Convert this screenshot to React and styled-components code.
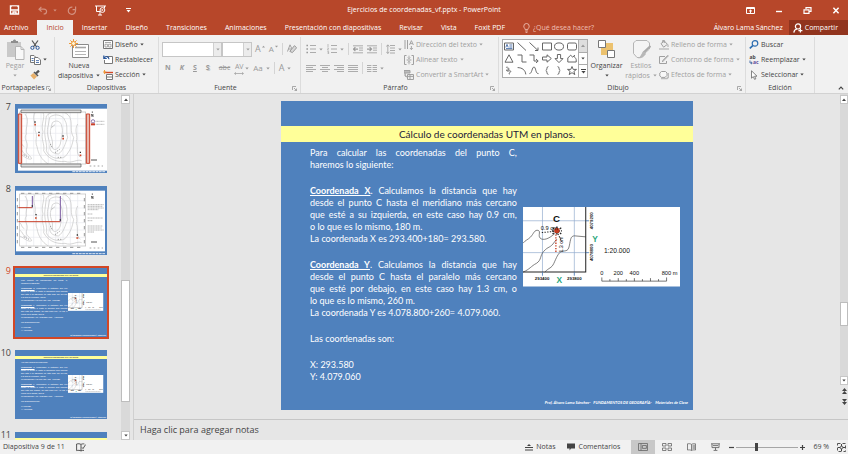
import React, { useState } from "react";
import styled, { createGlobalStyle } from "styled-components";

const GlobalStyle = createGlobalStyle`
    * {
        box-sizing: border-box;
    }
    body {
        margin: 0;
        font-family: "Open Sans", "Noto Sans", sans-serif;
        font-size: 7px;
        line-height: 10px;
        color: #444;
        background-color: #e6e6e6;
    }
    button, select, input, textarea {
        font: inherit;
        color: inherit;
        margin: 0;
        padding: 0;
        border: none;
        background: none;
    }
    p, h1, h2, ol {
        margin: 0;
        padding: 0;
    }
    svg {
        display: block;
        flex: none;
    }
`
const Window = styled.div`
    display: flex;
    flex-direction: column;
    height: 100vh;
    overflow: hidden;
`

/* title bar */
const TitleBar = styled.header`
    display: grid;
    grid-template-columns: 1fr auto 1fr;
    align-items: center;
    height: 20px;
    background-color: #b7472a;
    color: #fff;
`
const QuickAccess = styled.div`
    display: flex;
    align-items: center;
    padding-left: 9px;
`
const QuickButton = styled.button`
    display: flex;
    align-items: center;
    gap: 5px;
    margin-right: ${props => props.$space || 0}px;
    opacity: ${props => props.$dim ? 0.4 : 1};
`
const DocTitle = styled.h1`
    font-size: 7px;
    font-weight: 400;
`
const WindowControls = styled.div`
    display: flex;
    justify-content: flex-end;
    gap: 20px;
    padding-right: 8px;
`

/* tabs */
const TabBar = styled.nav`
    display: flex;
    align-items: stretch;
    height: 15px;
    background-color: #b7472a;
    color: #fff;
`
const Tab = styled.button`
    padding: 0 9px;
    white-space: nowrap;
    color: ${props => props.$active ? "#b7472a" : "#fff"};
    background-color: ${props => props.$active ? "#f1f1f1" : "transparent"};
    &:first-child {
        padding-left: 4px;
    }
`
const TellMe = styled.label`
    display: flex;
    align-items: center;
    gap: 3px;
    margin-left: 9px;
    flex: 1;
    color: #eebfb2;
    input {
        width: 100%;
        min-width: 0;
    }
    input::placeholder {
        color: #eebfb2;
        opacity: 1;
    }
`
const Account = styled.button`
    padding: 0 6px;
    white-space: nowrap;
    color: #fff;
`
const ShareButton = styled.button`
    display: flex;
    align-items: center;
    gap: 2px;
    padding: 0 10px 0 4px;
    background-color: #91341e;
    color: #fff;
`

/* ribbon */
const Ribbon = styled.div`
    display: flex;
    align-items: stretch;
    height: 59px;
    padding-top: 2px;
    background-color: #f1f1f1;
    border-bottom: 1px solid #d2d2d2;
`
const Group = styled.section`
    display: flex;
    flex-direction: column;
    justify-content: space-between;
    flex: 0 0 ${props => props.$width}px;
    min-width: 0;
    border-right: 1px solid #dcdcdc;
`
const GroupBody = styled.div`
    display: flex;
    gap: ${props => props.$gap || 0}px;
    padding: 0 3px;
`
const GroupFooter = styled.div`
    display: flex;
    align-items: center;
    height: 10px;
    h2 {
        flex: 1;
        font-size: 7px;
        font-weight: 400;
        text-align: center;
    }
`
const Launcher = styled.button`
    width: 8px;
    color: #8a8a8a;
`
const BigButton = styled.button`
    display: flex;
    flex-direction: column;
    align-items: center;
    width: ${props => props.$width}px;
    padding-top: 2px;
    color: ${props => props.$dim ? "#a0a0a0" : "#444"};
    span {
        display: flex;
        align-items: center;
        justify-content: center;
        gap: 3px;
        height: 10px;
        white-space: nowrap;
    }
    svg:first-child {
        margin-bottom: 1px;
    }
`
const Stack = styled.div`
    display: flex;
    flex-direction: column;
`
const SmallButton = styled.button`
    display: flex;
    align-items: center;
    gap: 2px;
    height: 15px;
    white-space: nowrap;
    color: ${props => props.$dim ? "#a0a0a0" : "#444"};
`
const ToolRows = styled.div`
    display: flex;
    flex-direction: column;
    gap: 5px;
    padding-top: 5px;
`
const ToolRow = styled.div`
    display: flex;
    align-items: center;
    gap: ${props => props.$gap}px;
    height: 14px;
    padding-left: ${props => props.$indent || 0}px;
`
const ToolButton = styled.button`
    display: flex;
    align-items: center;
    gap: ${props => props.$tight ? 1 : 3}px;
    color: #9a9a9a;
    font-size: ${props => props.$size || 7}px;
    font-weight: ${props => props.$bold ? 700 : 400};
    font-style: ${props => props.$italic ? "italic" : "normal"};
    text-decoration: ${props => props.$line || "none"};
    text-shadow: ${props => props.$shadow ? "1px 1px 0 #ccc" : "none"};
`
const Divider = styled.span`
    width: 1px;
    height: 12px;
    background-color: #d4d4d4;
`
const SelectWrap = styled.div`
    display: grid;
    width: ${props => props.$width}px;
    height: 15px;
    border: 1px solid #c6c6c6;
    background-color: #fff;
    select {
        grid-area: 1 / 1;
        appearance: none;
        width: 100%;
    }
`
const SelectArrow = styled.span`
    grid-area: 1 / 1;
    justify-self: end;
    display: flex;
    align-items: center;
    justify-content: center;
    width: 8px;
    background-color: #ececec;
    border-left: 1px solid #d0d0d0;
    color: #a0a0a0;
    pointer-events: none;
`
const Gallery = styled.div`
    display: flex;
    width: 86px;
    height: 39px;
    margin-top: 2px;
    border: 1px solid #ababab;
    background-color: #fff;
`
const Shapes = styled.div`
    display: grid;
    grid-template-columns: repeat(6, 1fr);
    flex: 1;
    place-items: center;
    color: #666;
`
const GalleryScroll = styled.div`
    display: flex;
    flex-direction: column;
    width: 9px;
    border-left: 1px solid #ababab;
    button {
        flex: 1;
        display: flex;
        align-items: center;
        justify-content: center;
    }
    button:first-child {
        background-color: #dedede;
        color: #999;
    }
    button + button {
        border-top: 1px solid #ababab;
    }
`
const Collapse = styled.button`
    margin-left: auto;
    align-self: flex-end;
    padding: 0 4px 3px;
`

/* work area */
const Workspace = styled.div`
    display: flex;
    flex: 1;
    min-height: 0;
    background-color: #e6e6e6;
`
const ThumbPane = styled.aside`
    display: flex;
    flex: 0 0 134px;
    padding-right: 3px;
    border-right: 1px solid #d0d0d0;
`
const ThumbList = styled.ol`
    display: flex;
    flex-direction: column;
    gap: 13px;
    flex: 1;
    padding-top: 10px;
    overflow: hidden;
    list-style: none;
`
const ThumbItem = styled.li`
    display: flex;
    flex: none;
    gap: 4px;
    font-size: 9px;
    line-height: 5px;
    color: ${props => props.$active ? "#d24726" : "#444"};
    > span {
        width: 11px;
        text-align: right;
    }
`
const ThumbFrame = styled.button`
    display: block;
    width: 92px;
    height: 69px;
    text-align: left;
    outline: ${props => props.$active ? "2px solid #d24726" : "none"};
`
const ScrollTrack = styled.div`
    display: flex;
    flex-direction: column;
    width: ${props => props.$width}px;
    padding-top: 1px;
    background-color: #d9d9d9;
`
const ScrollButton = styled.button`
    display: flex;
    align-items: center;
    justify-content: center;
    height: 9px;
    flex: none;
    background-color: #fff;
    border: 1px solid #c6c6c6;
`
const ScrollThumb = styled.div`
    height: ${props => props.$length}px;
    background-color: #fff;
    border: 1px solid #bdbdbd;
`
const ScrollSpace = styled.div`
    flex: ${props => props.$grow};
`
const SlideSteps = styled.div`
    display: flex;
    flex-direction: column;
    align-items: center;
    gap: 5px;
    padding: 3px 0 14px;
    background-color: #e6e6e6;
`
const Editor = styled.main`
    display: flex;
    flex-direction: column;
    flex: 1;
    min-width: 0;
`
const Canvas = styled.div`
    display: flex;
    flex: 1;
    min-height: 0;
`
const Stage = styled.div`
    display: flex;
    flex: 1;
    align-items: flex-start;
    justify-content: center;
    padding-top: 7px;
    overflow: hidden;
`
const StageSlide = styled.div`
    width: 100%;
    max-width: 412px;
    aspect-ratio: 4 / 3;
`
const Notes = styled.textarea`
    display: block;
    width: 100%;
    height: 21px;
    padding: 5px 6px;
    border-top: 1px solid #c6c6c6;
    font-size: 9px;
    resize: none;
    overflow: hidden;
    &::placeholder {
        color: #444;
        opacity: 1;
    }
`

/* slide, $mini is the thumbnail version */
const SlideSheet = styled.article`
    display: flex;
    flex-direction: column;
    width: 100%;
    height: 100%;
    padding-top: ${props => props.$mini ? 6 : 25}px;
    overflow: hidden;
    background-color: #4f81bd;
    font-family: Lato, "Open Sans", sans-serif;
    color: #fff;
`
const SlideBand = styled.div`
    height: ${props => props.$mini ? 3 : 16}px;
    line-height: ${props => props.$mini ? 3 : 16}px;
    flex: none;
    background-color: #ffff99;
    color: #1d1b3a;
    font-size: ${props => props.$mini ? 2 : 10}px;
    text-align: center;
`
const SlideBody = styled.div`
    display: flex;
    flex: 1;
    gap: ${props => props.$mini ? 1 : 6}px;
    padding-left: ${props => props.$mini ? 6 : 29}px;
    padding-top: ${props => props.$mini ? 2 : 5}px;
`
const SlideText = styled.div`
    display: flex;
    flex-direction: column;
    gap: ${props => props.$mini ? 2 : 14}px;
    flex: 0 0 54%;
    font-size: ${props => props.$mini ? 2 : 9}px;
    line-height: ${props => props.$mini ? 3 : 12}px;
`
const Line = styled.span`
    display: block;
    white-space: nowrap;
    text-align: justify;
    text-align-last: ${props => props.$full ? "justify" : "left"};
    b {
        text-decoration: underline;
    }
`
const SlideFigure = styled.div`
    flex: 0 0 41%;
    padding-top: ${props => props.$mini ? 14 : 60}px;
    svg {
        width: 100%;
        height: auto;
    }
`
const SlideFooter = styled.div`
    padding-right: ${props => props.$mini ? 1 : 5}px;
    height: ${props => props.$mini ? 2 : 10}px;
    line-height: ${props => props.$mini ? 1 : 6}px;
    font-size: ${props => props.$mini ? 1 : 4}px;
    font-weight: 700;
    font-style: italic;
    text-align: right;
    white-space: pre;
`

/* status bar */
const StatusBar = styled.footer`
    display: flex;
    align-items: center;
    height: 14px;
    flex: none;
    padding-left: 3px;
    background-color: #f1f1f1;
`
const StatusButton = styled.button`
    display: flex;
    align-items: center;
    justify-content: center;
    gap: 3px;
    height: 14px;
    padding: 0 ${props => props.$pad || 6}px;
    white-space: nowrap;
    background-color: ${props => props.$active ? "#c8c8c8" : "transparent"};
`
const StatusSpace = styled.div`
    flex: 1;
`
const Views = styled.div`
    display: flex;
    margin-left: 5px;
`
const ViewButton = styled(StatusButton)`
    width: 24px;
    padding: 0;
    color: #666;
`
const ZoomSlider = styled.input`
    appearance: none;
    width: 62px;
    height: 8px;
    background: linear-gradient(#a6a6a6, #a6a6a6) center / 100% 1px no-repeat;
    &::-webkit-slider-thumb {
        appearance: none;
        width: 3px;
        height: 8px;
        background-color: #444;
    }
`

function Svg({ w, h, vb, children }) {
    return (
        <svg width={w} height={h} viewBox={vb || `0 0 ${w} ${h}`} fill="none" stroke="currentColor" strokeWidth="1" aria-hidden="true">
            {children}
        </svg>
    )
}

function Caret({ up }) {
    return (
        <Svg w={4} h={3}>
            <path d={up ? "M0 3L2 0.5L4 3Z" : "M0.3 0.5L2 2.5L3.7 0.5Z"} fill="currentColor" stroke="none" />
        </Svg>
    )
}

function LaunchIcon() {
    return (
        <Svg w={5} h={5} vb="0 0 10 10">
            <path d="M1 8V1H8M4 4L9 9M9 5V9H5" strokeWidth="1.4" />
        </Svg>
    )
}

const LINES = {
    left: [10, 7, 10, 7],
    center: [10, 6, 10, 6],
    right: [10, 7, 10, 7],
    justify: [10, 10, 10, 10],
}

function AlignIcon({ kind }) {
    return (
        <Svg w={10} h={9}>
            {LINES[kind].map((len, i) => {
                const x = kind === "right" ? 10 - len : kind === "center" ? (10 - len) / 2 : 0;
                return <path key={i} d={`M${x} ${i * 2 + 1.5}h${len}`} strokeWidth="0.8" />
            })}
        </Svg>
    )
}

function ListIcon({ numbered }) {
    return (
        <Svg w={10} h={10}>
            <path d="M4 1.5H10M4 5H10M4 8.5H10" strokeWidth="0.8" />
            {numbered
                ? <path d="M1 0V3M0.3 4H1.6L0.4 6H1.8M0.3 7.4H1.6V10H0.3M0.6 8.6H1.6" strokeWidth="0.6" />
                : <path d="M0.4 1.5H2M0.4 5H2M0.4 8.5H2" strokeWidth="1.5" />}
        </Svg>
    )
}

function IndentIcon({ right }) {
    return (
        <Svg w={10} h={9}>
            <path d="M0 0.8H10M6 3H10M6 5.2H10M0 7.8H10" strokeWidth="0.8" />
            <path d={right ? "M0 4.1H4.4M2.6 2.2L4.6 4.1L2.6 6" : "M0.6 4.1H5M2.4 2.2L0.5 4.1L2.4 6"} strokeWidth="1.1" />
        </Svg>
    )
}

const SHAPES = [
    <><path d="M0.5 1H9.5V8H0.5Z" /><path d="M1.8 5.4L3 2.4L4.2 5.4M5.4 3H8.4M5.4 5H8.4M2 6.6H8.4" stroke="#2b579a" strokeWidth="0.8" /></>,
    <path d="M0.5 0.5L9 8.5" />,
    <path d="M0.5 0.5L9 8.5M9 5.5V8.5H6" />,
    <path d="M0.5 1H9.5V8H0.5Z" />,
    <ellipse cx="5" cy="4.5" rx="4.5" ry="3.6" />,
    <rect x="0.5" y="1" width="9" height="7" rx="1.6" />,
    <path d="M5 0.8L9 8.2H1Z" />,
    <path d="M0.5 1H5V8H9.5" />,
    <path d="M0.5 1H5V7H9M7 5L9.2 7L7 9" />,
    <path d="M0.5 3H5V0.8L9.3 4.5L5 8.2V6H0.5Z" />,
    <path d="M3.4 0.5H6.6V4.6H9L5 8.6L1 4.6H3.4Z" />,
    <path d="M0.8 8V4L3.6 1.2L5.8 3.2L7.6 1.2C6 4 9.4 3.4 9.2 5.6V8Z" />,
    <path d="M3 0.6C1 2.4 6.4 1.6 5 3.6C3.6 5 2 3 2.6 4.6C3.4 6 7.4 3.6 6.6 5.8C6 7.4 4.6 6 5.4 8.4" />,
    <path d="M0.6 1.6C5 1.6 8.4 4 8.8 8.4" />,
    <path d="M0.5 7.6C3 7.6 3 1 5 1C7 1 6.4 8 9.5 7.6" />,
    <path d="M6.4 0.6C4 0.6 5.8 4 3.8 4.5C5.8 5 4 8.4 6.4 8.4" />,
    <path d="M3.6 0.6C6 0.6 4.2 4 6.2 4.5C4.2 5 6 8.4 3.6 8.4" />,
    <path d="M5 0.5L6.2 3.4H9.5L6.9 5.4L7.8 8.6L5 6.7L2.2 8.6L3.1 5.4L0.5 3.4H3.8Z" />,
]

function MapFigure() {
    return (
        <svg viewBox="0 0 468 237" fill="none" fontFamily="Liberation Sans, sans-serif">
            <rect width="468" height="237" fill="#fff" />
            <path d="M58 0V206M153 0V206M0 41H196M0 136H196" stroke="#8fa9cc" strokeWidth="2" />
            <path d="M0 108C8 98 14 98 22 90C32 80 34 66 46 70C54 74 42 88 54 95C66 100 82 92 100 74M0 194C20 186 24 176 40 168C56 158 50 144 62 132C76 116 80 124 94 104L101 96M65 194C78 180 84 184 92 168C100 150 104 140 112 134C124 128 134 136 138 116C142 96 142 86 154 86L187 89" stroke="#444" strokeWidth="2" />
            <path d="M187 0V194H0" stroke="#222" strokeWidth="3" />
            <path d="M58 194V204M153 194V204M187 41H197M187 136H197" stroke="#4f81bd" strokeWidth="2" />
            <path d="M56 76L92 73M104 80L116 104" stroke="#222" strokeWidth="3" strokeDasharray="4 4" />
            <path d="M98 82V136" stroke="#c43a1e" strokeWidth="4" strokeDasharray="4 4" />
            <path d="M88 62L114 80M114 62L88 80M101 58V84M86 71H116" stroke="#222" strokeWidth="4" strokeDasharray="6 3" />
            <circle cx="101" cy="70" r="8" fill="#c43a1e" />
            <g fill="#111" textAnchor="middle">
                <text x="100" y="44" fontSize="29" fontWeight="700">C</text>
                <text x="78" y="68" fontSize="17">0.9 cm</text>
                <text transform="translate(120 112) rotate(-90)" fontSize="16">1.3 cm</text>
                <g fontSize="13" fontWeight="700">
                    <text x="57" y="217">293400</text>
                    <text x="153" y="217">293800</text>
                    <text transform="translate(210 41) rotate(-90)">4079200</text>
                    <text transform="translate(210 136) rotate(-90)">4078800</text>
                </g>
                <text x="280" y="138" fontSize="20">1:20.000</text>
                <g fontSize="17">
                    <text x="235" y="202">0</text>
                    <text x="284" y="202">200</text>
                    <text x="332" y="202">400</text>
                    <text x="437" y="202">800 m</text>
                </g>
            </g>
            <g fill="#1fa67a" fontSize="25" fontWeight="700" textAnchor="middle">
                <text x="108" y="226">X</text>
                <text x="215" y="105">Y</text>
            </g>
            <path d="M235 210V221H428V210M259 215V221M284 212V221M308 215V221M332 212V221M356 215V221M380 212V221M404 215V221" stroke="#333" strokeWidth="2" />
        </svg>
    )
}

function Contours() {
    return (
        <g stroke="#c2c2c2" strokeWidth="2">
            <path d="M30 30C46 50 30 70 34 90C24 104 40 112 36 130C28 150 44 150 50 164C40 170 28 156 14 150M60 26C50 44 64 60 60 78C70 96 58 110 66 128C70 150 80 168 100 180M84 26C92 40 76 60 84 84C76 104 90 120 86 140C96 160 120 176 150 172C170 180 186 164 200 170" />
            <path d="M104 40C120 26 146 34 150 50C160 66 152 84 158 100C150 120 146 140 130 150C112 148 100 140 106 120C98 100 94 80 100 64Z" />
            <path d="M112 56C124 46 138 52 140 66C146 84 138 104 136 120C128 140 112 142 112 126C116 108 104 96 106 80Z" />
            <path d="M94 36C116 14 160 20 166 44C172 60 164 84 176 100C172 124 166 140 150 158C130 170 100 160 94 140C98 120 86 100 90 70Z" />
            <path d="M188 60C176 80 190 96 184 112C192 130 180 146 196 160M14 110C22 116 18 124 28 128M14 132C26 140 22 150 34 152" />
            <path d="M110 70L120 62M106 120L112 132M120 146L134 136M26 152L42 160M128 160H142" stroke="#777" strokeWidth="2" strokeDasharray="4 3" />
        </g>
    )
}

function PlanThumb({ marked }) {
    return (
        <svg width="92" height="69" viewBox="0 0 276 207" fill="none">
            <rect width="276" height="207" fill="#4f81bd" />
            <rect x={marked ? 9 : 3} y="14" width="267" height={marked ? 186 : 182} fill="#fff" />
            <path d="M34 24V180M56 24V180M78 24V180M100 24V180M122 24V180M144 24V180M166 24V180M188 24V180M14 44H212M14 66H212M14 88H212M14 110H212M14 132H212M14 154H212" stroke="#e8eaef" strokeWidth="2" />
            <rect x="14" y="24" width="198" height="156" stroke="#bbb" strokeWidth="2" />
            <Contours />
            {marked ? (
                <g>
                    <path d="M18 18H198V26H18ZM18 180H198V189H18Z" fill="#ddd" stroke="#555" strokeWidth="2" />
                    <path d="M10 30H20V178H10ZM214 30H224V178H214Z" fill="#e9b8ae" stroke="#c9402a" strokeWidth="3" />
                    <path d="M58 62H63M69 94H74M142 104H147M194 154H199" stroke="#d24726" strokeWidth="5" />
                    <path d="M58 54H62M70 85H74M142 96H146M194 145H198" stroke="#333" strokeWidth="4" />
                    <circle cx="234" cy="52" r="5" stroke="#5a3a8a" strokeWidth="2" />
                    <path d="M228 61H240" stroke="#c9402a" strokeWidth="6" />
                    <path d="M242 52H268M242 61H268" stroke="#999" strokeWidth="2" strokeDasharray="3 1" />
                </g>
            ) : (
                <g>
                    <path d="M10 65H52M10 107H136" stroke="#c9402a" strokeWidth="3" />
                    <path d="M52 30V65M136 30V107" stroke="#7a5aa0" strokeWidth="3" />
                    <path d="M60 96H65M184 156H190" stroke="#d24726" strokeWidth="5" />
                    <path d="M50 60H54M61 86H65M185 147H189M134 102H138" stroke="#333" strokeWidth="4" />
                    <path d="M218 56H266M218 61H262M218 66H266M218 71H250M218 96H264M218 84H232M218 104H232M218 120H262M218 126H260M218 132H266M218 138H238" stroke="#999" strokeWidth="2" strokeDasharray="4 1" />
                    <path d="M18 22H200M18 184H200" stroke="#999" strokeWidth="3" strokeDasharray="10 11" />
                    <path d="M7 36V176M208 36V176" stroke="#999" strokeWidth="3" strokeDasharray="10 11" />
                </g>
            )}
            <path d="M230 38V30L234 38V30M232 27V22" stroke="#333" strokeWidth="2" />
            <path d="M228 168H246" stroke="#555" strokeWidth="3" />
            <path d="M224 186H264" stroke="#777" strokeWidth="2" strokeDasharray="5 7" />
            <path d="M172 203H270" stroke="#dce6f2" strokeWidth="3" strokeDasharray="8 2" />
        </svg>
    )
}

const BLOCKS = [
    [["Para calcular las coordenadas del punto C,", true], ["haremos lo siguiente:"]],
    [
        [<><b>Coordenada X</b>. Calculamos la distancia que hay</>, true],
        ["desde el punto C hasta el meridiano más cercano", true],
        ["que esté a su izquierda, en este caso hay 0.9 cm,", true],
        ["o lo que es lo mismo, 180 m."],
        ["La coordenada X es 293.400+180= 293.580."],
    ],
    [
        [<><b>Coordenada Y</b>. Calculamos la distancia que hay</>, true],
        ["desde el punto C hasta el paralelo más cercano", true],
        ["que esté por debajo, en este caso hay 1.3 cm, o", true],
        ["lo que es lo mismo, 260 m."],
        ["La coordenada Y es 4.078.800+260= 4.079.060."],
    ],
    [["Las coordenadas son:"]],
    [["X: 293.580"], ["Y: 4.079.060"]],
]

const ALT_BLOCKS = [[["Hay más formas de calcularlas:"]], ...BLOCKS.slice(1)]

function Slide({ mini, blocks }) {
    return (
        <SlideSheet $mini={mini}>
            <SlideBand $mini={mini}>Cálculo de coordenadas UTM en planos.</SlideBand>
            <SlideBody $mini={mini}>
                <SlideText $mini={mini}>
                    {blocks.map((lines, i) => (
                        <p key={i}>
                            {lines.map(([text, full], j) => <Line key={j} $full={full}>{text}</Line>)}
                        </p>
                    ))}
                </SlideText>
                <SlideFigure $mini={mini}>
                    <MapFigure />
                </SlideFigure>
            </SlideBody>
            <SlideFooter $mini={mini}>Prof. Álvaro Lama Sánchez-   FUNDAMENTOS DE GEOGRAFÍA-    Materiales de Clase</SlideFooter>
        </SlideSheet>
    )
}

function Footer({ title, launcher }) {
    return (
        <GroupFooter>
            <h2>{title}</h2>
            {launcher && <Launcher aria-label={title}><LaunchIcon /></Launcher>}
        </GroupFooter>
    )
}

function ClipboardGroup() {
    return (
        <Group $width={55}>
            <GroupBody $gap={3}>
                <BigButton $width={24} $dim>
                    <Svg w={19} h={21}>
                        <path d="M1 3H15V18H1Z" fill="#c9c9c9" stroke="none" />
                        <path d="M5 4V2H7C7 0 10 0 10 2H12V4Z" fill="#8e8e8e" stroke="none" />
                        <path d="M9.5 7.5H15L18 10.5V20.5H9.5Z" fill="#f8f8f8" stroke="#b5b5b5" />
                        <path d="M15 7.5V10.5H18" stroke="#b5b5b5" />
                    </Svg>
                    <span>Pegar</span>
                    <span><Caret /></span>
                </BigButton>
                <Stack>
                    <SmallButton aria-label="Cortar">
                        <Svg w={10} h={10}>
                            <path d="M2 0.5L6.6 6.8M8 0.5L3.4 6.8" stroke="#555" strokeWidth="1.2" />
                            <circle cx="2.4" cy="7.8" r="1.6" stroke="#2b579a" />
                            <circle cx="7.6" cy="7.8" r="1.6" stroke="#2b579a" />
                        </Svg>
                    </SmallButton>
                    <SmallButton aria-label="Copiar">
                        <Svg w={11} h={10}>
                            <path d="M0.5 0.5H4L6 2.5V7.5H0.5Z" fill="#fff" stroke="#777" />
                            <path d="M4.5 2.5H8L10.5 5V9.5H4.5Z" fill="#fff" stroke="#777" />
                            <path d="M6 5.6H9M6 7.5H9M1.6 3.5H3.6M1.6 5.5H3.6" stroke="#2b579a" strokeWidth="0.8" />
                        </Svg>
                        <Caret />
                    </SmallButton>
                    <SmallButton aria-label="Copiar formato">
                        <Svg w={10} h={10}>
                            <path d="M9 0.6L6 3.4" stroke="#555" strokeWidth="2.2" />
                            <path d="M4 2L8 6" stroke="#555" strokeWidth="1.6" />
                            <path d="M3.4 3L7 6.6L4 9.6L0.4 5.4Z" fill="#e8b06a" stroke="none" />
                        </Svg>
                    </SmallButton>
                </Stack>
            </GroupBody>
            <Footer title="Portapapeles" launcher />
        </Group>
    )
}

function SlidesGroup() {
    return (
        <Group $width={104}>
            <GroupBody $gap={3}>
                <BigButton $width={42}>
                    <Svg w={21} h={21}>
                        <path d="M3.5 5.5H19.5V18.5H3.5Z" fill="#fff" stroke="#8a8a8a" />
                        <path d="M6 8.5H17" stroke="#a5a5a5" strokeWidth="1.6" />
                        <path d="M6 12.5H17M6 15.5H17" stroke="#b5b5b5" />
                        <path d="M4.5 0V9M0 4.5H9M1.4 1.4L7.6 7.6M7.6 1.4L1.4 7.6" stroke="#ed9a3a" />
                        <circle cx="4.5" cy="4.5" r="2" fill="#fff4d6" stroke="#ed9a3a" />
                    </Svg>
                    <span>Nueva</span>
                    <span>diapositiva <Caret /></span>
                </BigButton>
                <Stack>
                    <SmallButton>
                        <Svg w={10} h={9}>
                            <path d="M0.5 0.5H9.5V8.5H0.5Z" fill="#fff" stroke="#777" />
                            <path d="M2 2.5H8M2 4.2H4.4V7H2ZM5.6 4.2H8V7H5.6Z" stroke="#888" strokeWidth="0.7" />
                        </Svg>
                        Diseño <Caret />
                    </SmallButton>
                    <SmallButton>
                        <Svg w={10} h={9}>
                            <path d="M2.5 1.5H9.5V8.5H1.5V5" fill="#fff" stroke="#777" />
                            <path d="M0.8 0.5V3.5H3.8M1 3.4C2.4 0.6 5.8 1 6 4.2" stroke="#2b579a" strokeWidth="1.2" />
                        </Svg>
                        Restablecer
                    </SmallButton>
                    <SmallButton>
                        <Svg w={10} h={10}>
                            <path d="M2 2.5H10" stroke="#d24726" strokeWidth="1.4" />
                            <path d="M3.5 4.5H9.5V9.5H3.5ZM3.5 7H9.5" fill="#fff" stroke="#777" />
                            <path d="M1.5 0V4M0 2H3.4" stroke="#ed9a3a" />
                        </Svg>
                        Sección <Caret />
                    </SmallButton>
                </Stack>
            </GroupBody>
            <Footer title="Diapositivas" />
        </Group>
    )
}

function FontGroup() {
    return (
        <Group $width={142}>
            <GroupBody>
                <ToolRows>
                    <ToolRow $gap={0}>
                        <SelectWrap $width={60}>
                            <select aria-label="Fuente"><option></option></select>
                            <SelectArrow><Caret /></SelectArrow>
                        </SelectWrap>
                        <SelectWrap $width={30}>
                            <select aria-label="Tamaño de fuente"><option></option></select>
                            <SelectArrow><Caret /></SelectArrow>
                        </SelectWrap>
                        <ToolRow $gap={4} $indent={3}>
                            <ToolButton $size={9} $tight aria-label="Aumentar tamaño">A<Svg w={3} h={8} vb="0 0 4 10"><path d="M0 3L2 0.6L4 3Z" fill="currentColor" stroke="none" /></Svg></ToolButton>
                            <ToolButton $size={8} $tight aria-label="Disminuir tamaño">A<Svg w={3} h={8} vb="0 0 4 10"><path d="M0 0.6L2 3L4 0.6Z" fill="currentColor" stroke="none" /></Svg></ToolButton>
                            <Divider />
                            <ToolButton aria-label="Borrar formato">
                                <Svg w={10} h={10}>
                                    <path d="M0.5 7.5L3 0.8L5 5M1.4 5H4" strokeWidth="0.9" />
                                    <path d="M7.5 1.6L9.6 3.8L5.4 8.6L2.8 7.4Z" fill="#d8d8d8" />
                                </Svg>
                            </ToolButton>
                        </ToolRow>
                    </ToolRow>
                    <ToolRow $gap={9} $indent={3}>
                        <ToolButton $bold>N</ToolButton>
                        <ToolButton $bold $italic>K</ToolButton>
                        <ToolButton $bold $line="underline">S</ToolButton>
                        <ToolButton $bold $shadow>S</ToolButton>
                        <ToolRow $gap={4}>
                            <ToolButton $line="line-through">abc</ToolButton>
                            <ToolButton $tight aria-label="Espaciado entre caracteres">
                                <Stack>
                                    <span>AV</span>
                                    <Svg w={10} h={3}><path d="M0.6 1.5H9.4M2 0.3L0.6 1.5L2 2.7M8 0.3L9.4 1.5L8 2.7" strokeWidth="0.7" /></Svg>
                                </Stack>
                                <Caret />
                            </ToolButton>
                            <ToolButton $size={8}>Aa <Caret /></ToolButton>
                            <Divider />
                            <ToolButton $size={9}>A <Caret /></ToolButton>
                        </ToolRow>
                    </ToolRow>
                </ToolRows>
            </GroupBody>
            <Footer title="Fuente" launcher />
        </Group>
    )
}

function ParagraphGroup() {
    return (
        <Group $width={198}>
            <GroupBody $gap={2}>
                <ToolRows>
                    <ToolRow $gap={4} $indent={2}>
                        <ToolButton aria-label="Viñetas"><ListIcon /> <Caret /></ToolButton>
                        <ToolButton aria-label="Numeración"><ListIcon numbered /> <Caret /></ToolButton>
                        <Divider />
                        <ToolButton aria-label="Reducir nivel"><IndentIcon /></ToolButton>
                        <ToolButton aria-label="Aumentar nivel"><IndentIcon right /></ToolButton>
                        <Divider />
                        <ToolButton aria-label="Interlineado">
                            <Svg w={9} h={10}>
                                <path d="M4 1.5H9M4 4H9M4 6.5H9M4 9H9" strokeWidth="0.8" />
                                <path d="M1.8 1V9.4M0.3 2.6L1.8 0.8L3.3 2.6M0.3 7.8L1.8 9.5L3.3 7.8" strokeWidth="0.8" />
                            </Svg>
                            <Caret />
                        </ToolButton>
                    </ToolRow>
                    <ToolRow $gap={4} $indent={2}>
                        <ToolButton aria-label="Alinear a la izquierda"><AlignIcon kind="left" /></ToolButton>
                        <ToolButton aria-label="Centrar"><AlignIcon kind="center" /></ToolButton>
                        <ToolButton aria-label="Alinear a la derecha"><AlignIcon kind="right" /></ToolButton>
                        <ToolButton aria-label="Justificar"><AlignIcon kind="justify" /></ToolButton>
                        <Divider />
                        <ToolButton aria-label="Columnas">
                            <Svg w={10} h={9}><path d="M0 1.5H4.4M0 3.5H4.4M0 5.5H4.4M0 7.5H4.4M5.6 1.5H10M5.6 3.5H10M5.6 5.5H10M5.6 7.5H10" strokeWidth="0.8" /></Svg>
                            <Caret />
                        </ToolButton>
                    </ToolRow>
                </ToolRows>
                <Stack>
                    <SmallButton $dim>
                        <Svg w={10} h={10}>
                            <path d="M1 0V9M3.5 0V9" />
                            <path d="M5.4 5L7.4 0.6L9.4 5M6 3.6H8.8M7.4 6V9.5M6 8L7.4 9.6L8.8 8" strokeWidth="0.9" />
                        </Svg>
                        Dirección del texto <Caret />
                    </SmallButton>
                    <SmallButton $dim>
                        <Svg w={10} h={10}>
                            <path d="M2.5 0.5H0.5V9.5H2.5M7.5 0.5H9.5V9.5H7.5M2.6 5H7.4" />
                            <path d="M5 0.6V3.6M3.8 2.4L5 3.8L6.2 2.4M5 9.4V6.4M3.8 7.6L5 6.2L6.2 7.6" strokeWidth="0.8" />
                        </Svg>
                        Alinear texto <Caret />
                    </SmallButton>
                    <SmallButton $dim>
                        <Svg w={10} h={10}>
                            <path d="M0 0.5H6V3H0ZM1 3V6L3 7" fill="#bbb" />
                            <path d="M3.5 4.5H9.5V9.5H3.5ZM3.5 6.4H9.5M6 4.5V9.5" fill="#eee" />
                        </Svg>
                        Convertir a SmartArt <Caret />
                    </SmallButton>
                </Stack>
            </GroupBody>
            <Footer title="Párrafo" launcher />
        </Group>
    )
}

function DrawingGroup() {
    return (
        <Group $width={247}>
            <GroupBody $gap={2}>
                <Gallery>
                    <Shapes>
                        {SHAPES.map((shape, i) => <Svg key={i} w={10} h={9}>{shape}</Svg>)}
                    </Shapes>
                    <GalleryScroll>
                        <button aria-label="Subir"><Caret up /></button>
                        <button aria-label="Bajar"><Caret /></button>
                        <button aria-label="Más formas"><Svg w={5} h={5}><path d="M0 0.5H5" /><path d="M0.4 2L2.5 4.6L4.6 2Z" fill="currentColor" stroke="none" /></Svg></button>
                    </GalleryScroll>
                </Gallery>
                <BigButton $width={33}>
                    <Svg w={19} h={21}>
                        <path d="M4 4H16V16H4Z" fill="#ecc26f" stroke="none" />
                        <path d="M1.5 1.5H8.5V8.5H1.5ZM10.5 11.5H17.5V18.5H10.5Z" fill="#fff" stroke="#777" />
                    </Svg>
                    <span>Organizar</span>
                    <span><Caret /></span>
                </BigButton>
                <BigButton $width={32} $dim>
                    <Svg w={19} h={21}>
                        <path d="M4 1.5H15L17.5 4V10L8 18.5H5L1.5 14.5V4Z" fill="#f4f4f4" stroke="#b5b5b5" />
                        <path d="M18.5 7L11 14" stroke="#aaa" strokeWidth="2" />
                        <path d="M12 12L14 15C11 19 9 19.4 6 19.4C9 18 8.6 15 12 12Z" fill="#b8b8b8" stroke="none" />
                    </Svg>
                    <span>Estilos</span>
                    <span>rápidos <Caret /></span>
                </BigButton>
                <Stack>
                    <SmallButton $dim>
                        <Svg w={10} h={10}>
                            <path d="M2 3.6L5.4 1L8.4 4.4L4.6 7.2Z" fill="#eee" />
                            <path d="M3.6 2.6V0.5H5.4V3M9 4.6V7" strokeWidth="0.9" />
                            <path d="M0 9H10" stroke="#ccc" strokeWidth="2" />
                        </Svg>
                        Relleno de forma <Caret />
                    </SmallButton>
                    <SmallButton $dim>
                        <Svg w={10} h={10}>
                            <path d="M6 1.5H0.5V8.5H7.5V6" />
                            <path d="M9.4 0.8L4.4 6L3.4 7L3.8 5.4L8.6 0.4Z" fill="#ccc" strokeWidth="0.8" />
                        </Svg>
                        Contorno de forma <Caret />
                    </SmallButton>
                    <SmallButton $dim>
                        <Svg w={10} h={10}>
                            <path d="M2 8.5H8L9.5 7V3" stroke="#bbb" strokeWidth="1.6" />
                            <path d="M2.5 1.5H6.5L8 3V5.4L6 7.4H2.5L0.8 6V3Z" fill="#f8f8f8" />
                        </Svg>
                        Efectos de forma <Caret />
                    </SmallButton>
                </Stack>
            </GroupBody>
            <Footer title="Dibujo" launcher />
        </Group>
    )
}

function EditGroup() {
    return (
        <Group $width={69}>
            <GroupBody>
                <Stack>
                    <SmallButton>
                        <Svg w={10} h={9}>
                            <circle cx="6" cy="3.4" r="2.8" stroke="#2b6cb0" strokeWidth="1.2" />
                            <path d="M4 5.4L0.8 8.4" stroke="#2b6cb0" strokeWidth="1.6" />
                        </Svg>
                        Buscar
                    </SmallButton>
                    <SmallButton>
                        <Svg w={10} h={12} vb="0 0 20 24">
                            <g fill="#444" stroke="none" fontSize="10" fontWeight="700">
                                <text x="1" y="10">ab</text>
                                <text x="8" y="20" fill="#5b4a9a">ac</text>
                            </g>
                            <path d="M2 13V18H6M4 15.6L6.6 18L4 20.4" stroke="#2b579a" strokeWidth="1.6" />
                        </Svg>
                        Reemplazar <Caret />
                    </SmallButton>
                    <SmallButton>
                        <Svg w={10} h={10}>
                            <path d="M2.5 0.8V8.2L4.3 6.6L5.6 9.4L6.8 8.8L5.6 6.2H8Z" fill="#fff" stroke="#666" strokeWidth="0.8" />
                        </Svg>
                        Seleccionar <Caret />
                    </SmallButton>
                </Stack>
            </GroupBody>
            <Footer title="Edición" />
        </Group>
    )
}

const TABS = ["Archivo", "Inicio", "Insertar", "Diseño", "Transiciones", "Animaciones", "Presentación con diapositivas", "Revisar", "Vista", "Foxit PDF"]

export default function App() {
    const [tab, setTab] = useState("Inicio");
    const [current, setCurrent] = useState(9);
    const [zoom, setZoom] = useState(69);

    const thumbs = [
        [7, <PlanThumb marked />],
        [8, <PlanThumb />],
        [9, <Slide mini blocks={BLOCKS} />],
        [10, <Slide mini blocks={ALT_BLOCKS} />],
        [11, <SlideSheet $mini><SlideBand $mini /></SlideSheet>],
    ]

    return (
        <Window>
            <GlobalStyle />
            <TitleBar>
                <QuickAccess>
                    <QuickButton $space={18} aria-label="Guardar">
                        <Svg w={11} h={10}>
                            <path d="M1.5 1H9.5V9H1.5Z" strokeWidth="1.4" />
                            <path d="M3 1.5H8V4.5H3Z" fill="#b7472a" stroke="none" />
                            <path d="M2 5H9M4 9V7H7V9" strokeWidth="1.3" />
                        </Svg>
                    </QuickButton>
                    <QuickButton $dim $space={10} aria-label="Deshacer">
                        <Svg w={10} h={9}><path d="M3.4 0.8L1 3.2L3.6 5.6M1 3.2H6C9.6 3.2 9.4 8 5.6 8" strokeWidth="1.2" /></Svg>
                        <Caret />
                    </QuickButton>
                    <QuickButton $dim $space={18} aria-label="Rehacer">
                        <Svg w={10} h={9}><path d="M5.4 1.2A3.6 3.6 0 1 0 8.4 4M5.6 3.6H8.6V0.6" strokeWidth="1.2" /></Svg>
                    </QuickButton>
                    <QuickButton $space={20} aria-label="Presentación desde el principio">
                        <Svg w={11} h={11}>
                            <path d="M0 1H11M1.5 1V6.5H5M9.5 1V3M5 7V10M3 10H7" />
                            <circle cx="7.4" cy="5" r="2.4" fill="#b7472a" />
                            <path d="M6.6 3.8L8.6 5L6.6 6.2Z" fill="currentColor" stroke="none" />
                        </Svg>
                    </QuickButton>
                    <QuickButton aria-label="Personalizar">
                        <Svg w={5} h={5}><path d="M0 0.5H5" /><path d="M0.5 2L2.5 4.4L4.5 2Z" fill="currentColor" stroke="none" /></Svg>
                    </QuickButton>
                </QuickAccess>
                <DocTitle>Ejercicios de coordenadas_vf.pptx - PowerPoint</DocTitle>
                <WindowControls>
                    <QuickButton aria-label="Opciones de la cinta"><Svg w={9} h={7}><path d="M0.5 0.5H8.5V6.5H0.5ZM0.5 1.5H8.5M4.5 6V3M3 4.4L4.5 3L6 4.4" /></Svg></QuickButton>
                    <QuickButton aria-label="Minimizar"><Svg w={8} h={7}><path d="M1 4.5H7" strokeWidth="1.4" /></Svg></QuickButton>
                    <QuickButton aria-label="Restaurar"><Svg w={9} h={7}><path d="M3 2V0.7H8V4.4H6.4M1 2.8H6V6.3H1Z" strokeWidth="1.2" /></Svg></QuickButton>
                    <QuickButton aria-label="Cerrar"><Svg w={8} h={7}><path d="M1.4 0.8L6.6 6.2M6.6 0.8L1.4 6.2" strokeWidth="1.5" /></Svg></QuickButton>
                </WindowControls>
            </TitleBar>
            <TabBar>
                {TABS.map(name => (
                    <Tab key={name} $active={tab === name} onClick={() => setTab(name)}>{name}</Tab>
                ))}
                <TellMe>
                    <Svg w={7} h={10}>
                        <path d="M2.2 6.6C2.2 5.4 0.8 5 0.8 3.2A2.7 2.7 0 0 1 6.2 3.2C6.2 5 4.8 5.4 4.8 6.6ZM2.2 8H4.8M2.6 9.4H4.4" strokeWidth="0.9" />
                    </Svg>
                    <input placeholder="¿Qué desea hacer?" aria-label="¿Qué desea hacer?" />
                </TellMe>
                <Account>Álvaro Lama Sánchez</Account>
                <ShareButton>
                    <Svg w={10} h={10}>
                        <circle cx="5" cy="3.4" r="2.6" strokeWidth="1.2" />
                        <path d="M0.8 9.6C1 7.4 2.2 6.2 4 6M7.4 5.6V9.6M5.4 7.6H9.4" strokeWidth="1.2" />
                    </Svg>
                    Compartir
                </ShareButton>
            </TabBar>
            <Ribbon>
                <ClipboardGroup />
                <SlidesGroup />
                <FontGroup />
                <ParagraphGroup />
                <DrawingGroup />
                <EditGroup />
                <Collapse aria-label="Contraer la cinta">
                    <Svg w={6} h={4}><path d="M0.8 3.4L3 1.2L5.2 3.4" strokeWidth="1.2" /></Svg>
                </Collapse>
            </Ribbon>
            <Workspace>
                <ThumbPane>
                    <ThumbList>
                        {thumbs.map(([number, picture]) => (
                            <ThumbItem key={number} $active={current === number}>
                                <span>{number}</span>
                                <ThumbFrame $active={current === number} aria-label={`Diapositiva ${number}`} onClick={() => setCurrent(number)}>
                                    {picture}
                                </ThumbFrame>
                            </ThumbItem>
                        ))}
                    </ThumbList>
                    <ScrollTrack $width={9}>
                        <ScrollButton aria-label="Subir"><Caret up /></ScrollButton>
                        <ScrollSpace $grow={6} />
                        <ScrollThumb $length={122} />
                        <ScrollSpace $grow={1} />
                        <ScrollButton aria-label="Bajar"><Caret /></ScrollButton>
                    </ScrollTrack>
                </ThumbPane>
                <Editor>
                    <Canvas>
                        <Stage>
                            <StageSlide>
                                <Slide blocks={BLOCKS} />
                            </StageSlide>
                        </Stage>
                        <ScrollTrack $width={8}>
                            <ScrollButton aria-label="Subir"><Caret up /></ScrollButton>
                            <ScrollSpace $grow={4} />
                            <ScrollThumb $length={24} />
                            <ScrollSpace $grow={1} />
                            <ScrollButton aria-label="Bajar"><Caret /></ScrollButton>
                            <SlideSteps>
                                <button aria-label="Diapositiva anterior"><Svg w={5} h={6}><path d="M0 3L2.5 0L5 3ZM0 6L2.5 3L5 6Z" fill="currentColor" stroke="none" /></Svg></button>
                                <button aria-label="Diapositiva siguiente"><Svg w={5} h={6}><path d="M0 0L2.5 3L5 0ZM0 3L2.5 6L5 3Z" fill="currentColor" stroke="none" /></Svg></button>
                            </SlideSteps>
                        </ScrollTrack>
                    </Canvas>
                    <Notes placeholder="Haga clic para agregar notas" aria-label="Notas" />
                </Editor>
            </Workspace>
            <StatusBar>
                <span>Diapositiva {current} de 11</span>
                <StatusButton $pad={11} aria-label="Ortografía">
                    <Svg w={10} h={9}>
                        <path d="M5 8V1.5C4 0.6 2 0.6 0.6 1V7.6C2 7.2 4 7.2 5 8C5.6 7.4 7 7.2 8 7.4M5 1.5C5.6 1 7 0.6 8.4 1" strokeWidth="0.9" />
                        <path d="M6 4.4L7 5.6L9.6 1.6" strokeWidth="0.9" />
                    </Svg>
                </StatusButton>
                <StatusSpace />
                <StatusButton>
                    <Svg w={8} h={7}><path d="M0 3.5H8M0 6H8" /><path d="M2 2L4 0L6 2Z" fill="currentColor" stroke="none" /></Svg>
                    Notas
                </StatusButton>
                <StatusButton>
                    <Svg w={8} h={8}><path d="M0 0.5H8V5.5H4L2.6 7.5V5.5H0Z" fill="currentColor" stroke="none" /></Svg>
                    Comentarios
                </StatusButton>
                <Views>
                    <ViewButton $active aria-label="Normal">
                        <Svg w={10} h={8}><path d="M0.5 0.5H9.5V7.5H0.5ZM3 0.5V7.5M4.4 2.5H8.4V5.4H4.4Z" strokeWidth="0.8" /></Svg>
                    </ViewButton>
                    <ViewButton aria-label="Clasificador">
                        <Svg w={10} h={8}><path d="M0.5 0.5H4V3H0.5ZM6 0.5H9.5V3H6ZM0.5 5H4V7.5H0.5ZM6 5H9.5V7.5H6Z" strokeWidth="0.8" /></Svg>
                    </ViewButton>
                    <ViewButton aria-label="Lectura">
                        <Svg w={9} h={8}><path d="M4.5 7.5C3.4 6.8 2 6.8 0.5 7V0.8C2 0.6 3.4 0.6 4.5 1.4C5.6 0.6 7 0.6 8.5 0.8V7C7 6.8 5.6 6.8 4.5 7.5ZM4.5 1.4V7.5" strokeWidth="0.8" /><path d="M5.4 1.6H8V6.4H5.4Z" fill="#aaa" stroke="none" /></Svg>
                    </ViewButton>
                    <ViewButton aria-label="Presentación">
                        <Svg w={9} h={8}><path d="M0 0.8H9M1 1V4.6H8V1M4.5 4.6V7M2.6 7.4H6.4M2 2.6H7" strokeWidth="0.9" /></Svg>
                    </ViewButton>
                </Views>
                <StatusButton $pad={2} aria-label="Alejar" onClick={() => setZoom(zoom - 1)}>
                    <Svg w={5} h={5}><path d="M0 2.5H5" strokeWidth="1.2" /></Svg>
                </StatusButton>
                <ZoomSlider type="range" min="10" max="195" value={zoom} aria-label="Zoom" onChange={e => setZoom(Number(e.target.value))} />
                <StatusButton $pad={2} aria-label="Acercar" onClick={() => setZoom(zoom + 1)}>
                    <Svg w={5} h={5}><path d="M0 2.5H5M2.5 0V5" strokeWidth="1.2" /></Svg>
                </StatusButton>
                <StatusButton>{zoom} %</StatusButton>
                <StatusButton $pad={2} aria-label="Ajustar a la ventana">
                    <Svg w={9} h={9}>
                        <path d="M0.5 0.5H8.5V8.5H0.5Z" strokeWidth="0.9" strokeDasharray="3 2" />
                        <path d="M4.5 1V3M4.5 6V8M1 4.5H3M6 4.5H8" strokeWidth="1" />
                        <path d="M3.4 3.4H5.6V5.6H3.4Z" strokeWidth="0.7" />
                    </Svg>
                </StatusButton>
            </StatusBar>
        </Window>
    )
}
